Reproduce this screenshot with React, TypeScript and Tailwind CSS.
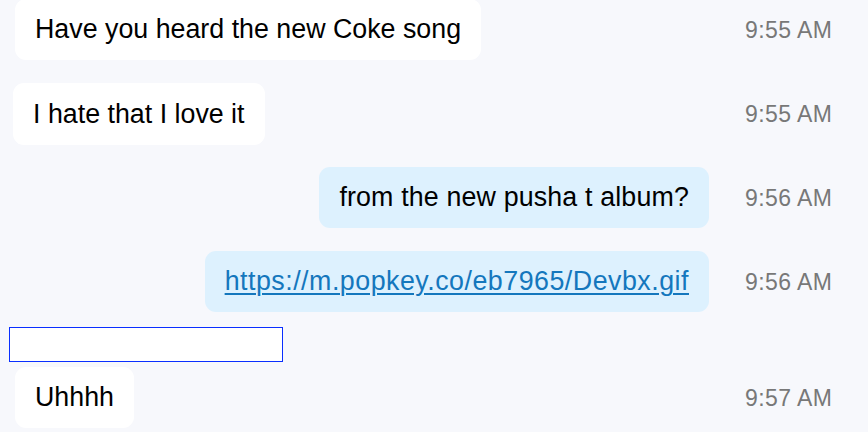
import React from "react";

type Msg = {
  text: string;
  time: string;
  outgoing?: boolean;
  link?: boolean;
  left?: string;
  track?: string;
  mt: string;
  h: string;
};

const messages: Msg[] = [
  { text: "Have you heard the new Coke song", time: "9:55 AM", left: "pl-[15px]", mt: "-mt-px", h: "h-[61px]" },
  { text: "I hate that I love it", time: "9:55 AM", left: "pl-[13px]", mt: "mt-[23px]", h: "h-[62px]" },
  { text: "from the new pusha t album?", time: "9:56 AM", outgoing: true, track: "tracking-[0.15px]", mt: "mt-[22px]", h: "h-[61px]" },
  { text: "https://m.popkey.co/eb7965/Devbx.gif", time: "9:56 AM", outgoing: true, link: true, track: "tracking-[0.5px]", mt: "mt-[23px]", h: "h-[61px]" },
];

function Time({ children }: { children: React.ReactNode }) {
  return (
    <div className="ml-[36px] w-[87px] text-right text-[23px] leading-[28px] tracking-[0.4px] text-[#787878] whitespace-nowrap">
      {children}
    </div>
  );
}

function Row({ m }: { m: Msg }) {
  return (
    <div className={`flex items-center pr-[36px] ${m.mt}`}>
      <div className={`flex flex-1 ${m.outgoing ? "justify-end" : "justify-start"} ${m.left ?? ""}`}>
        <div
          className={`flex items-center px-[20px] rounded-[11px] ${m.h} ${
            m.outgoing ? "bg-[#ddf1fe]" : "bg-white"
          }`}
        >
          {m.link ? (
            <a
              href="#"
              className={`text-[26.8px] leading-[31px] text-[#1477bd] underline underline-offset-[3px] decoration-[1.5px] ${m.track ?? ""}`}
            >
              {m.text}
            </a>
          ) : (
            <span className={`text-[26.8px] leading-[31px] text-black ${m.track ?? ""}`}>{m.text}</span>
          )}
        </div>
      </div>
      <Time>{m.time}</Time>
    </div>
  );
}

export default function App() {
  return (
    <div
      className="w-[868px] h-[432px] overflow-hidden bg-[#f7f8fc] flex flex-col"
      style={{ fontFamily: '"Liberation Sans", Arial, sans-serif' }}
    >
      {messages.map((m, i) => (
        <Row key={i} m={m} />
      ))}
      <div className="mt-[15px] ml-[9px] w-[274px] h-[35px] shrink-0 bg-white border border-[#0a2fff]" />
      <div className="flex items-center pr-[36px] mt-[5px]">
        <div className="flex flex-1 pl-[15px]">
          <div className="flex items-center px-[20px] h-[61px] rounded-[11px] bg-white">
            <span className="text-[26.8px] leading-[31px] text-black">Uhhhh</span>
          </div>
        </div>
        <Time>9:57 AM</Time>
      </div>
    </div>
  );
}
